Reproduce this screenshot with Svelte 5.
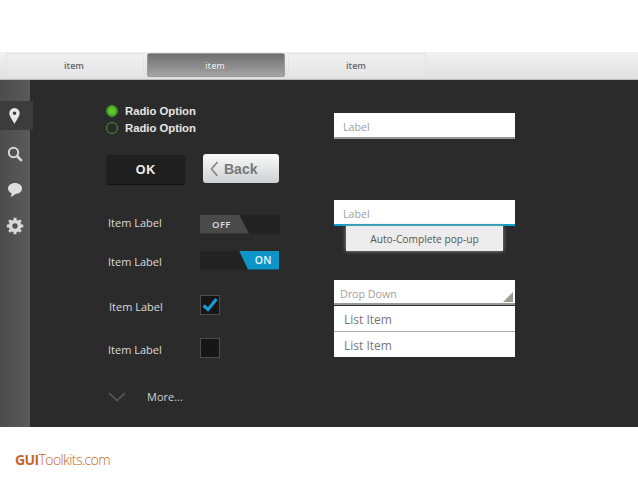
<script>
  const tabs = [{ t: 'item' }, { t: 'item', on: true }, { t: 'item' }];
</script>

<div class="page">
  <div class="tabbar">
    {#each tabs as tab}
      <div class="tab" class:on={tab.on}>{tab.t}</div>
    {/each}
  </div>
  <div class="main">
    <aside class="side">
      <div class="ic sel">
        <svg width="11" height="16" viewBox="0 0 11 16"><path fill="#e8e8e8" fill-rule="evenodd" d="M5.500 0A5.200 5.200 0 0 0 .3 5.200C.3 8.500 3.700 12 5.500 16c1.800-4 5.200-7.500 5.200-10.800A5.200 5.200 0 0 0 5.500 0zm0 3.400a1.800 1.800 0 1 1 0 3.600 1.800 1.800 0 0 1 0-3.600z"/></svg>
      </div>
      <div class="ic">
        <svg width="16" height="16" viewBox="0 0 16 16"><circle cx="6.500" cy="6.500" r="4.700" fill="none" stroke="#d8d8d8" stroke-width="2"/><path d="M10 10l4.800 4.800" stroke="#d8d8d8" stroke-width="2.600"/></svg>
      </div>
      <div class="ic">
        <svg width="16" height="16" viewBox="0 0 16 16"><path fill="#dedede" d="M8 1c3.800 0 7 2.300 7 5.500s-3 5.400-6.600 5.400c-1.300 1.400-3 2.400-4.900 2.800.7-.9 1.100-2 1.200-3.400C2.400 10.300 1 8.600 1 6.500 1 3.300 4.200 1 8 1z"/></svg>
      </div>
      <div class="ic">
        <svg width="18" height="18" viewBox="0 0 18 18"><circle cx="9" cy="9" r="4.500" fill="none" stroke="#d8d8d8" stroke-width="3.600"/><path stroke="#d8d8d8" stroke-width="3" d="M9 .8v3M9 14.200v3M.8 9h3M14.200 9h3M3.200 3.200l2.100 2.100M12.700 12.700l2.100 2.100M3.200 14.800l2.100-2.100M12.700 5.300l2.100-2.100"/></svg>
      </div>
    </aside>

    <section class="left">
      <div class="radios">
        <div class="radio"><span class="dot checked"></span><span>Radio Option</span></div>
        <div class="radio"><span class="dot"></span><span>Radio Option</span></div>
      </div>
      <div class="btns">
        <button class="ok">OK</button>
        <button class="back">
          <svg width="9" height="16" viewBox="0 0 9 16"><path d="M7.500 1L1.500 8l6 7" fill="none" stroke="#7d8082" stroke-width="1.500"/></svg>
          Back
        </button>
      </div>
      <div class="row r1">
        <span>Item Label</span>
        <div class="toggle"><div class="off">OFF</div></div>
      </div>
      <div class="row r2">
        <span>Item Label</span>
        <div class="toggle"><div class="onp">ON</div></div>
      </div>
      <div class="row r3">
        <span class="in">Item Label</span>
        <div class="check">
          <svg width="18" height="16" viewBox="0 0 18 16"><path d="M2.500 8.500l4.500 4L15.500 2" fill="none" stroke="#1a9ad0" stroke-width="3.200"/></svg>
        </div>
      </div>
      <div class="row r4">
        <span>Item Label</span>
        <div class="check"></div>
      </div>
      <div class="more">
        <svg width="18" height="10" viewBox="0 0 18 10"><path d="M1 1l8 7.500L17 1" fill="none" stroke="#5c5c5c" stroke-width="1.500"/></svg>
        <span>More...</span>
      </div>
    </section>

    <section class="right">
      <div class="input first">Label</div>
      <div class="input focus">Label</div>
      <div class="popup">Auto-Complete pop-up</div>
      <div class="input drop">Drop Down<i></i></div>
      <div class="list">
        <div>List Item</div>
        <div>List Item</div>
      </div>
    </section>
  </div>
  <div class="foot"><b>GUI</b>Toolkits.com</div>
</div>

<style>
  :global(body) { margin: 0; background: #fff; }
  .page { width: 638px; height: 479px; padding-top: 52px; box-sizing: border-box; overflow: hidden; font-family: "Open Sans", sans-serif; }
  .tabbar { height: 28px; box-sizing: border-box; display: flex; gap: 3px; padding: 1px 0 2px 6px; background: linear-gradient(#f1f1f1, #e0e0e0); border-bottom: 1px solid #bbb; }
  .tab { width: 138px; display: flex; align-items: center; justify-content: center; padding-right: 2px; font: 600 9px "Open Sans", sans-serif; color: #666; background: linear-gradient(#f0f0f0, #e6e6e6); border: 1px solid #e2e2e2; box-sizing: border-box; }
  .tab.on { color: #eee; background: linear-gradient(#6f6f6f, #a4a4a4); border-radius: 2px; border-color: #999; text-shadow: 0 0 1px #555; }
  .main { height: 347px; display: flex; background: #2b2b2b; }
  .side { width: 30px; box-sizing: border-box; padding-top: 21px; background: linear-gradient(90deg, #4c4c4c, #5a5a5a); display: flex; flex-direction: column; }
  .ic { height: 26px; width: 29px; display: flex; align-items: center; justify-content: center; margin-top: 10px; }
  .ic.sel { height: 29px; width: 33px; margin: 0; padding-right: 4px; box-sizing: border-box; background: #3c3c3c; }
  .ic:nth-child(2) { margin-top: 11px; }
  .ic:nth-child(3) { margin-top: 10px; }
  .ic:nth-child(4) { margin-top: 10px; }
  .left { width: 304px; box-sizing: border-box; padding: 24px 0 0 77px; color: #ddd; font-size: 11px; }
  .radios { display: flex; flex-direction: column; gap: 3px; margin-left: -1px; font: bold 11.300px "Liberation Sans", sans-serif; color: #e6e6e6; }
  .radio { display: flex; align-items: center; gap: 7px; height: 14px; }
  .dot { width: 10px; height: 10px; border-radius: 50%; border: 1px solid #4f9a2e; }
  .dot.checked { background: radial-gradient(#5fc32a 45%, #357a1e 80%); border-color: #3f9a2c; }
  .btns { display: flex; gap: 18px; margin-top: 19px; align-items: flex-start; }
  button { height: 29px; padding: 0; border: 0; font-family: "Liberation Sans", sans-serif; font-weight: bold; box-sizing: border-box; }
  .ok { width: 78px; margin-top: 1px; color: #eee; font-size: 12.500px; background: #1f1f1f; border-radius: 2px; box-shadow: 0 1px 1px #111; letter-spacing: 1px; padding-top: 1px; }
  .back { width: 76px; color: #75787a; font-size: 14px; background: linear-gradient(#fafafa, #cdd1d3); border-radius: 3px; display: flex; align-items: center; gap: 5px; padding: 1px 0 0 7px; }
  .row { display: flex; align-items: center; gap: 38px; height: 24px; color: #dcdcdc; font-size: 11px; }
  .row > span { width: 54px; margin-left: 1px; padding-top: 2px; white-space: nowrap; }
  .row > span.in { margin-left: 2px; margin-right: -1px; }
  .r1 { margin-top: 28px; }
  .r1 > span { margin-bottom: 5px; }
  .r2 { margin-top: 12px; }
  .r3 { margin-top: 21px; }
  .r4 { margin-top: 19px; }
  .toggle { width: 80px; height: 19px; background: #232323; display: flex; }
  .off { width: 49px; height: 19px; background: #4a4a4a; color: #ddd; font: 600 9.500px "Open Sans", sans-serif; letter-spacing: .4px; display: flex; align-items: center; padding-left: 12px; box-sizing: border-box; clip-path: polygon(0 0, 39px 0, 49px 100%, 0 100%); }
  .onp { margin-left: 39px; width: 40px; height: 19px; background: #0d94c8; color: #e8f4f8; font: 600 10.500px "Open Sans", sans-serif; letter-spacing: .4px; display: flex; align-items: center; justify-content: flex-end; padding-right: 7px; box-sizing: border-box; clip-path: polygon(0 0, 100% 0, 100% 100%, 9px 100%); }
  .check { width: 20px; height: 20px; box-sizing: border-box; background: #161616; border: 1px solid #4d4d4d; display: flex; align-items: center; justify-content: center; }
  .more { display: flex; align-items: center; gap: 21px; margin: 29px 0 0 1px; color: #cfcfcf; font-size: 11px; }
  .right { width: 181px; padding-top: 33px; box-sizing: border-box; }
  .input { height: 26px; box-sizing: border-box; background: #fff; padding: 7px 0 0 9px; color: #a0a0a0; font-size: 10.700px; border-bottom: 2px solid #999; font-family: "Open Sans", sans-serif; }
  .focus { margin-top: 61px; border-bottom-color: #11a0c4; }
  .popup { margin: 0 0 0 12px; width: 157px; height: 25px; padding-top: 1px; box-sizing: border-box; background: #ececec; color: #555; font-size: 10.200px; display: flex; align-items: center; justify-content: center; box-shadow: 0 0 4px #999; }
  .drop { margin-top: 29px; position: relative; padding-left: 6px; height: 25px; }
  .drop i { position: absolute; right: 2px; bottom: 1px; width: 0; height: 0; border-left: 10px solid transparent; border-bottom: 10px solid #9aa08e; }
  .list { margin-top: 1px; background: #fff; color: #777; font-size: 12px; }
  .list div { height: 25px; padding: 1px 0 0 10px; box-sizing: border-box; display: flex; align-items: center; }
  .list div:first-child { height: 26px; border-bottom: 1px solid #aaa; }
  .foot { margin: 25px 0 0 15px; font: 14px "Open Sans", sans-serif; letter-spacing: -.6px; color: #c4662a; font-weight: 300; line-height: 15px; }
  .foot b { font-weight: 700; }
</style>
